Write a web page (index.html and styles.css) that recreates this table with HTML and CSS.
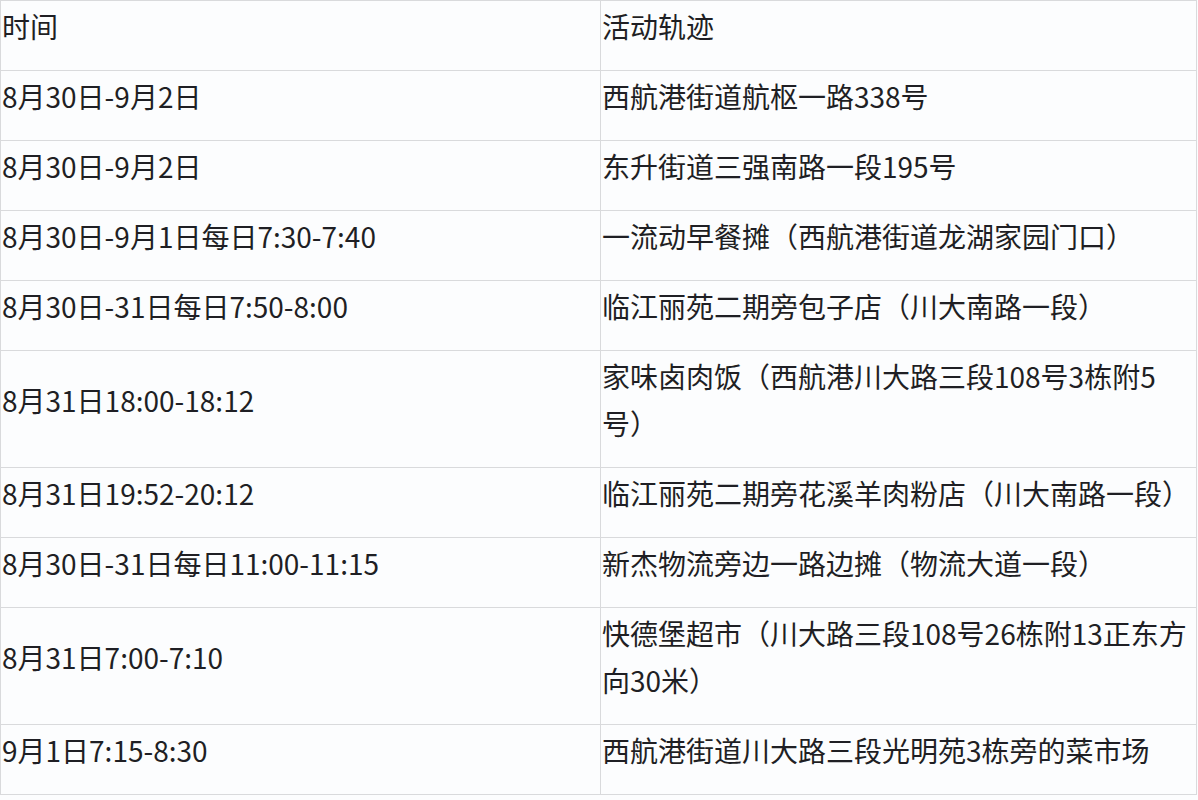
FILE: index.html
```html
<!DOCTYPE html>
<html lang="zh-CN">
<head>
<meta charset="utf-8">
<link rel="stylesheet" href="styles.css">
</head>
<body>
<table class="track">
  <tr><td class="c-time">时间</td><td class="c-place">活动轨迹</td></tr>
  <tr><td class="c-time">8月30日-9月2日</td><td class="c-place">西航港街道航枢一路338号</td></tr>
  <tr><td class="c-time">8月30日-9月2日</td><td class="c-place">东升街道三强南路一段195号</td></tr>
  <tr><td class="c-time">8月30日-9月1日每日7:30-7:40</td><td class="c-place">一流动早餐摊（西航港街道龙湖家园门口）</td></tr>
  <tr><td class="c-time">8月30日-31日每日7:50-8:00</td><td class="c-place">临江丽苑二期旁包子店（川大南路一段）</td></tr>
  <tr><td class="c-time">8月31日18:00-18:12</td><td class="c-place">家味卤肉饭（西航港川大路三段108号3栋附5号）</td></tr>
  <tr><td class="c-time">8月31日19:52-20:12</td><td class="c-place">临江丽苑二期旁花溪羊肉粉店（川大南路一段）</td></tr>
  <tr><td class="c-time">8月30日-31日每日11:00-11:15</td><td class="c-place">新杰物流旁边一路边摊（物流大道一段）</td></tr>
  <tr><td class="c-time">8月31日7:00-7:10</td><td class="c-place">快德堡超市（川大路三段108号26栋附13正东方向30米）</td></tr>
  <tr><td class="c-time">9月1日7:15-8:30</td><td class="c-place">西航港街道川大路三段光明苑3栋旁的菜市场</td></tr>
</table>
</body>
</html>
```

FILE: styles.css
```css
html, body {
  margin: 0;
  padding: 0;
  background: #fcfdfe;
}
.track {
  border-collapse: collapse;
  width: 1197px;
  table-layout: fixed;
  font-family: "Noto Sans CJK SC", "Noto Sans", sans-serif;
  font-size: 28px;
  color: #1f1f24;
}
.track td {
  border: 1px solid #d9dadc;
  padding: 2px 0 20px 1px;
  line-height: 47px;
  vertical-align: middle;
}
.c-time {
  width: 598px;
}
```
